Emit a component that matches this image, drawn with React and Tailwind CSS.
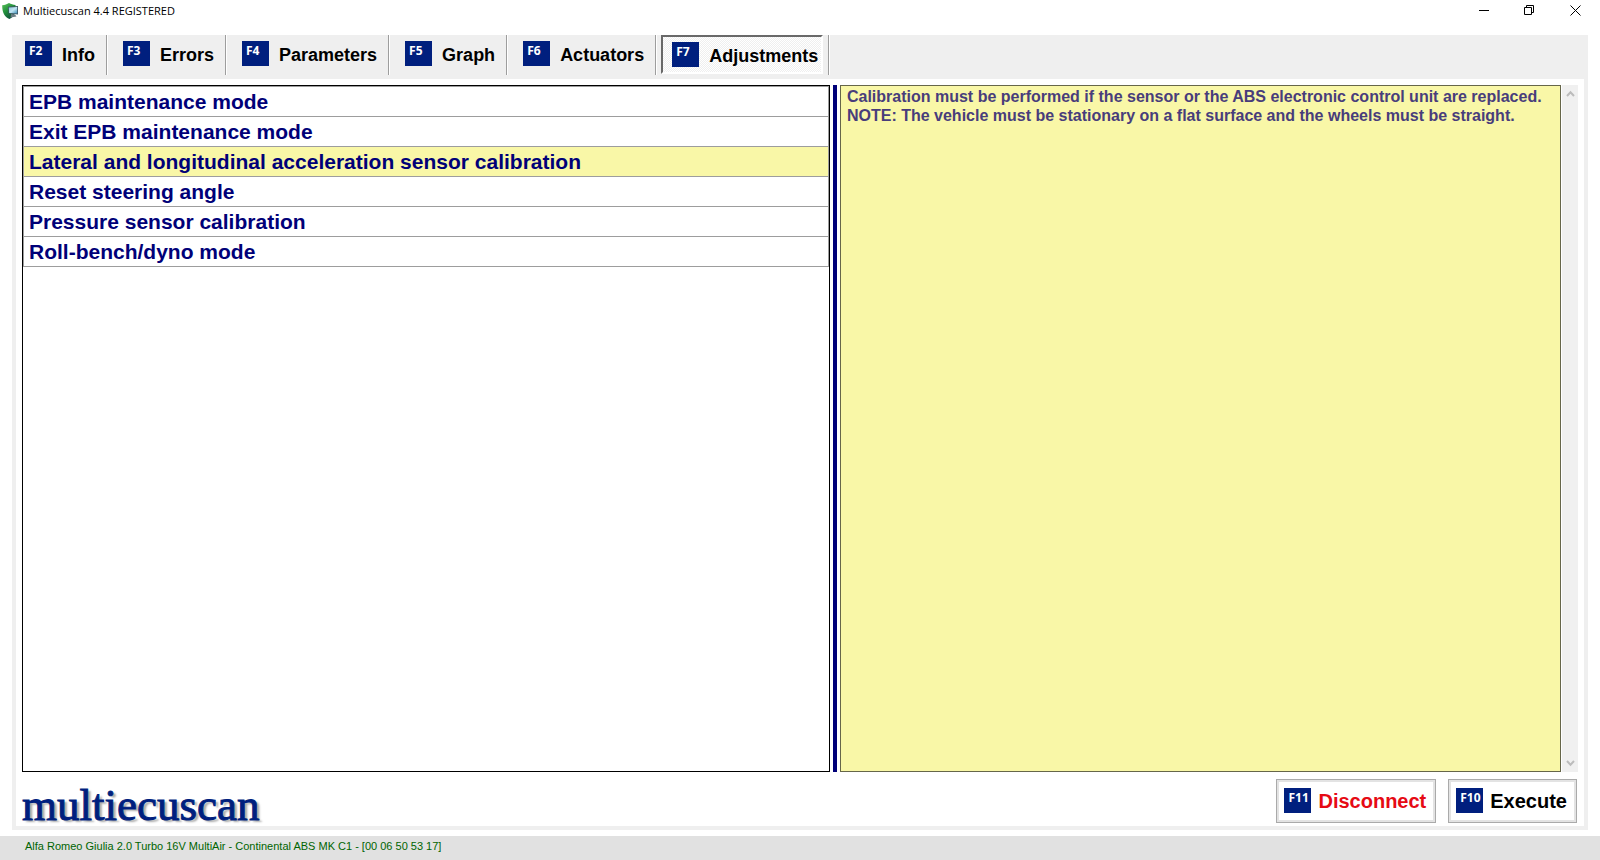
import { useState } from "react";

const TABS = [
  { key: "F2", label: "Info" },
  { key: "F3", label: "Errors" },
  { key: "F4", label: "Parameters" },
  { key: "F5", label: "Graph" },
  { key: "F6", label: "Actuators" },
  { key: "F7", label: "Adjustments" },
];

const ADJUSTMENTS = [
  "EPB maintenance mode",
  "Exit EPB maintenance mode",
  "Lateral and longitudinal acceleration sensor calibration",
  "Reset steering angle",
  "Pressure sensor calibration",
  "Roll-bench/dyno mode",
];

function KeyBadge({ children }) {
  return (
    <span className="w-[27px] h-[25px] shrink-0 pl-1 pt-[2px] bg-[#001f7e] text-white text-left text-[12px] leading-4 font-bold font-['Noto_Sans',sans-serif]">
      {children}
    </span>
  );
}

function AppIcon() {
  return (
    <svg width="18" height="18" viewBox="0 0 18 18" aria-hidden="true">
      <defs>
        <linearGradient id="shield" x1="0" y1="0" x2="0.6" y2="1">
          <stop offset="0" stopColor="#5cc25a" />
          <stop offset="0.5" stopColor="#22903c" />
          <stop offset="1" stopColor="#0f4f3a" />
        </linearGradient>
        <linearGradient id="screen" x1="0" y1="0" x2="1" y2="1">
          <stop offset="0" stopColor="#8fc4de" />
          <stop offset="0.5" stopColor="#c3e6f4" />
          <stop offset="1" stopColor="#3b8fb8" />
        </linearGradient>
      </defs>
      <path d="M1.200 3.200C4 3.200 6 2.200 8 1C10 2.200 12 2.800 14.500 3V9C14 12.500 12 15 8.500 17C4 15 1.200 11.500 1.200 3.200Z" fill="url(#shield)" />
      <path d="M7 4.800L17 4V12.500L7.500 11.600Z" fill="#3d5462" />
      <path d="M7.800 5.600L16.200 4.900V11.500L8.200 10.900Z" fill="url(#screen)" />
      <path d="M10 12L14 12.400L15.500 14.500L9.500 15.500Z" fill="#6b7c84" />
    </svg>
  );
}

function TitleBar() {
  return (
    <header className="h-[35px] flex items-start">
      <div className="flex items-center gap-1 pl-[1px] pt-[1px]">
        <AppIcon />
        <h1 className="text-[11px] leading-5 font-['Open_Sans',sans-serif] text-black">
          Multiecuscan 4.4 REGISTERED
        </h1>
      </div>
      <div className="ml-auto flex pr-[2px]">
        <button aria-label="Minimize" className="w-[46px] h-[20px] flex items-center justify-center">
          <svg width="11" height="11" viewBox="0 0 11 11" stroke="#000" fill="none">
            <path d="M0 5.500H10" />
          </svg>
        </button>
        <button aria-label="Restore" className="w-[45px] h-[20px] flex items-center justify-center">
          <svg width="11" height="11" viewBox="0 0 11 11" stroke="#000" fill="none">
            <path d="M0.500 2.500H7.500V9.500H0.500Z" />
            <path d="M2.500 2.500V0.500H9.500V7.500H7.500" />
          </svg>
        </button>
        <button aria-label="Close" className="w-[46px] h-[20px] flex items-center justify-center">
          <svg width="11" height="11" viewBox="0 0 11 11" stroke="#000" fill="none">
            <path d="M0.500 0.500L10.500 10.500M10.500 0.500L0.500 10.500" />
          </svg>
        </button>
      </div>
    </header>
  );
}

function Tabs({ active, onChange }) {
  return (
    <nav className="h-[44px] flex bg-[#efefef]">
      {TABS.map((t, i) => {
        const on = t.key === active;
        return (
          <div
            key={t.key}
            className={`h-10 flex border-r border-[#9d9d9d] shadow-[1px_0_0_#ffffff] ${on ? "pl-[5px] pr-[5px]" : ""}`}
          >
            <button
              aria-pressed={on}
              onClick={() => onChange(t.key)}
              className={
                on
                  ? "h-[39px] flex items-start gap-[10px] pt-[5px] pl-[9px] pr-[3px] border-2 border-t-[#696969] border-l-[#696969] border-r-white border-b-white bg-[repeating-conic-gradient(#efefef_0_25%,#ffffff_0_50%)] bg-[length:2px_2px]"
                  : `flex items-start gap-[10px] pt-[6px] pr-[11px] ${i === 0 ? "pl-[13px]" : "pl-[16px]"}`
              }
            >
              <KeyBadge>{t.key}</KeyBadge>
              <span className="text-[18px] leading-7 font-bold">{t.label}</span>
            </button>
          </div>
        );
      })}
    </nav>
  );
}

function AdjustmentList({ selected, onSelect }) {
  return (
    <div className="flex-[807] min-w-0 border border-black bg-white">
      <ul className="border-t border-x border-[#9d9d9d]">
        {ADJUSTMENTS.map((name, i) => (
          <li key={name} className="border-b border-[#9d9d9d]">
            <button
              onClick={() => onSelect(i)}
              className={`block w-full h-[29px] pl-[5px] text-left text-[21px] leading-[30px] font-bold text-[#000078] ${
                i === selected ? "bg-[#f9f7a7]" : "bg-white"
              }`}
            >
              {name}
            </button>
          </li>
        ))}
      </ul>
    </div>
  );
}

function Chevron({ down }) {
  return (
    <svg width="9" height="7" viewBox="0 0 9 7" fill="none" stroke="#bcbcbc" strokeWidth="2">
      <path d={down ? "M1 1L4.500 4.800L8 1" : "M1 6L4.500 2.200L8 6"} />
    </svg>
  );
}

function NotePanel() {
  return (
    <div className="flex-[739] min-w-0 flex gap-[1px]">
      <div className="flex-1 min-w-0 border border-[#66664a] bg-[#f9f7a7] px-[6px] pt-[1px] text-[16px] leading-[19px] font-bold text-[#483d7b]">
        <p>Calibration must be performed if the sensor or the ABS electronic control unit are replaced.</p>
        <p>NOTE: The vehicle must be stationary on a flat surface and the wheels must be straight.</p>
      </div>
      <div className="w-4 bg-[#f0f0f0] flex flex-col justify-between">
        <button aria-label="Scroll up" className="h-[17px] flex items-center justify-center">
          <Chevron />
        </button>
        <button aria-label="Scroll down" className="h-[17px] flex items-center justify-center">
          <Chevron down />
        </button>
      </div>
    </div>
  );
}

function ActionButton({ shortcut, children, className = "" }) {
  return (
    <button className={`h-[44px] border border-[#aaaaaa] bg-[#e3e3e3] p-[2px] ${className}`}>
      <span className="h-full flex items-start gap-[7px] bg-white pl-[5px] pr-[7px] pt-[6px]">
        <KeyBadge>{shortcut}</KeyBadge>
        <span className="text-[20px] leading-[26px] font-bold">{children}</span>
      </span>
    </button>
  );
}

export default function App() {
  const [tab, setTab] = useState("F7");
  const [selected, setSelected] = useState(2);

  return (
    <div className="min-h-screen flex flex-col bg-white text-black font-['Liberation_Sans',Arial,sans-serif]">
      <TitleBar />
      <main className="flex-1 flex flex-col mx-3 mb-[6px]">
        <Tabs active={tab} onChange={setTab} />
        <div className="flex-1 flex flex-col border-4 border-t-0 border-[#efefef] px-[6px] pt-[6px] pb-[3px]">
          <div className="flex-1 flex gap-[3px]">
            <AdjustmentList selected={selected} onSelect={setSelected} />
            <div className="w-1 bg-[#000078]" />
            <NotePanel />
          </div>
          <div className="flex items-start justify-between mt-[7px]">
            <div className="h-[44px] text-[45px] leading-[52px] text-[#001f7e] font-['Liberation_Serif',serif] [-webkit-text-stroke:1px_#001f7e] [text-shadow:3px_2px_2px_#aaaaaa]">
              multiecuscan
            </div>
            <div className="flex gap-3 pr-[1px]">
              <ActionButton shortcut="F11" className="text-[#e60a14]">Disconnect</ActionButton>
              <ActionButton shortcut="F10">Execute</ActionButton>
            </div>
          </div>
        </div>
      </main>
      <footer className="h-6 bg-[#e1e1e1] pl-[25px] text-[11px] leading-5 text-[#006400]">
        Alfa Romeo Giulia 2.0 Turbo 16V MultiAir - Continental ABS MK C1 - [00 06 50 53 17]
      </footer>
    </div>
  );
}
